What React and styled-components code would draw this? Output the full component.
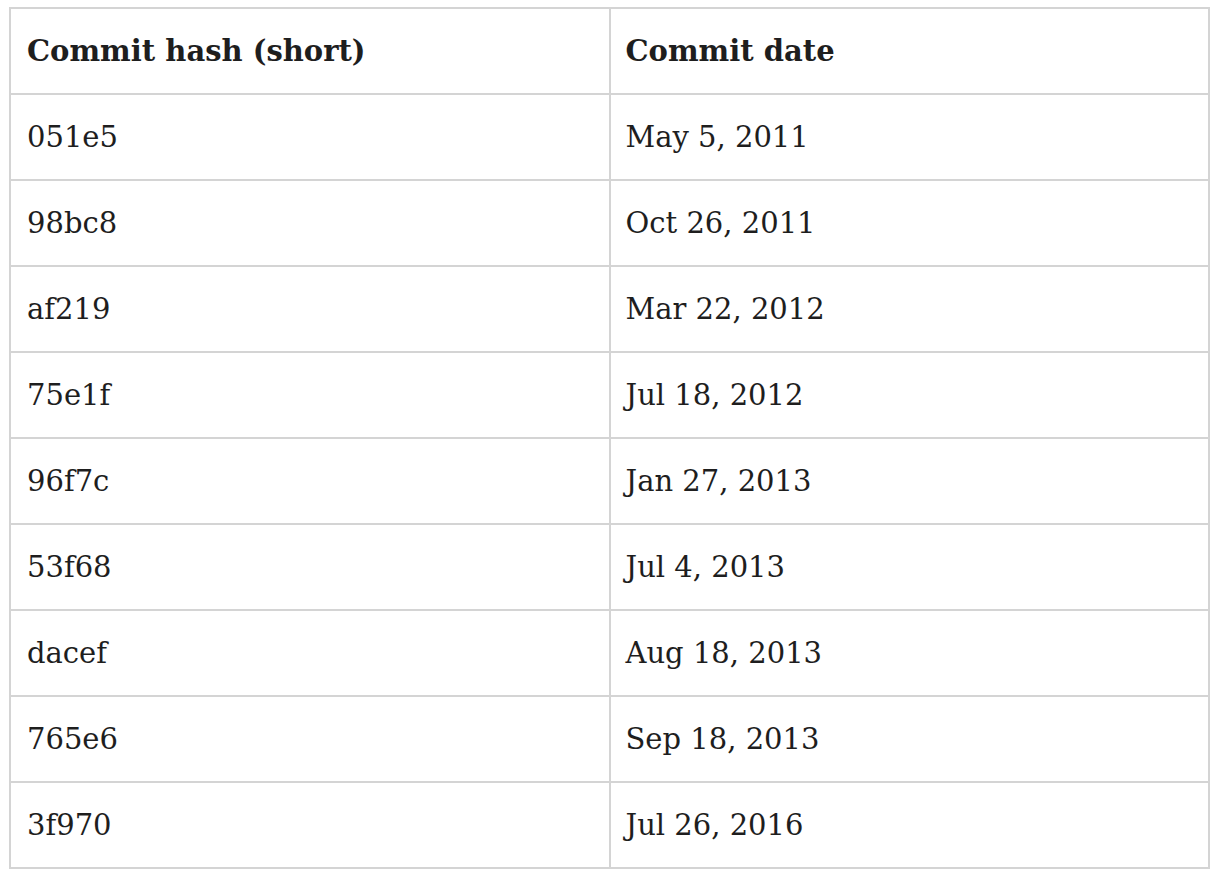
import React from 'react';
import styled, { createGlobalStyle } from 'styled-components';

const rows = [
  ['051e5', 'May 5, 2011'],
  ['98bc8', 'Oct 26, 2011'],
  ['af219', 'Mar 22, 2012'],
  ['75e1f', 'Jul 18, 2012'],
  ['96f7c', 'Jan 27, 2013'],
  ['53f68', 'Jul 4, 2013'],
  ['dacef', 'Aug 18, 2013'],
  ['765e6', 'Sep 18, 2013'],
  ['3f970', 'Jul 26, 2016'],
];

export default function App() {
  return (
    <Page>
      <GlobalStyle />
      <Table>
        <thead>
          <tr>
            <Head>Commit hash (short)</Head>
            <Head $pad={15}>Commit date</Head>
          </tr>
        </thead>
        <tbody>
          {rows.map(([hash, date]) => (
            <tr key={hash}>
              <Cell>{hash}</Cell>
              <Cell $pad={15}>{date}</Cell>
            </tr>
          ))}
        </tbody>
      </Table>
    </Page>
  );
}

const GlobalStyle = createGlobalStyle`
  *, *:before, *:after {
    box-sizing: border-box;
  }

  body {
    margin: 0;
    background: #fff;
    color: #1e1e1e;
    font-family: 'DejaVu Serif', 'Liberation Serif', serif;
    -webkit-font-smoothing: antialiased;
  }
`;

const Page = styled.div`
  padding: 7px 6px 0 9px;
`;

const Table = styled.table`
  width: 1201px;
  border-collapse: collapse;
  table-layout: fixed;
`;

const Head = styled.th`
  height: 86px;
  padding: 0 ${p => p.$pad || 16}px;
  border: 2px solid #d4d4d4;
  text-align: left;
  font-size: 29px;
  font-weight: 700;
`;

const Cell = styled.td`
  height: 86px;
  padding: 0 ${p => p.$pad || 16}px;
  border: 2px solid #d4d4d4;
  font-size: 29px;
  font-weight: 400;
`;
